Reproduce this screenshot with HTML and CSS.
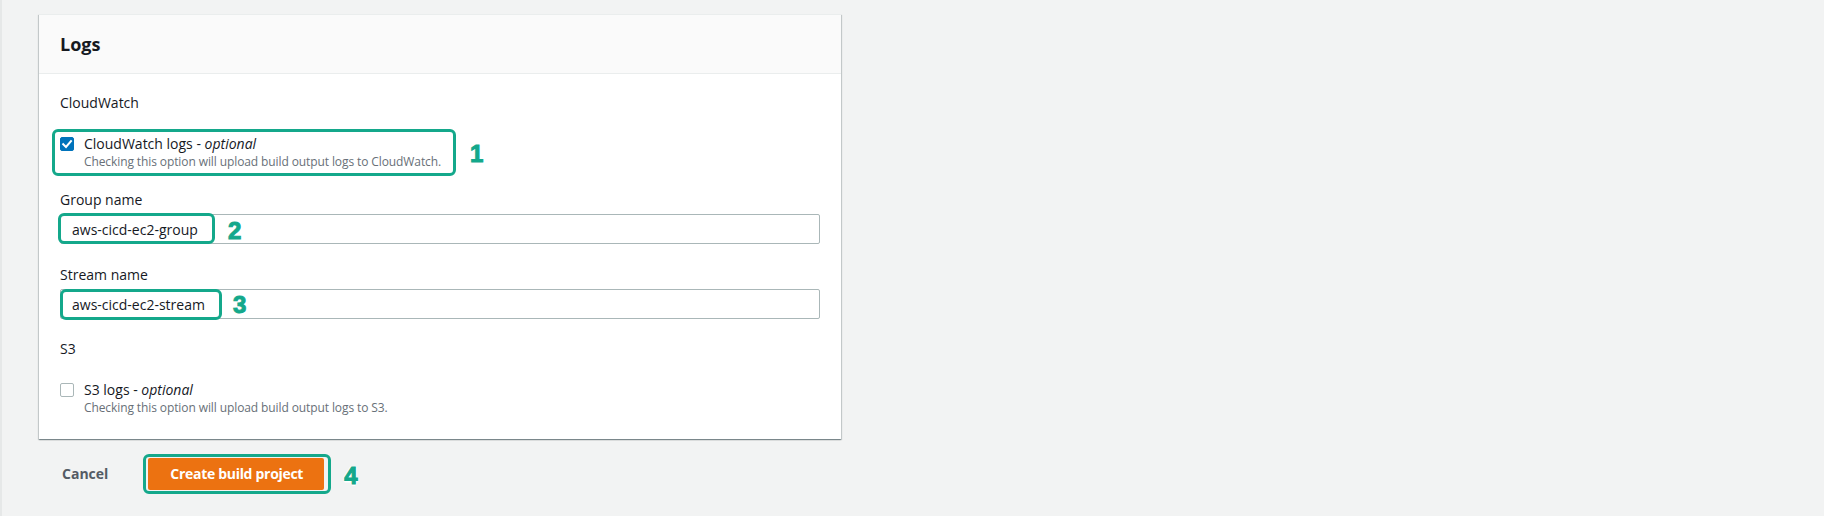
FILE: index.html
```html
<!DOCTYPE html>
<html lang="en">
<head>
<meta charset="utf-8">
<title>Logs</title>
<link rel="stylesheet" href="styles.css">
</head>
<body>
<div class="page">
  <section class="panel">
    <header class="panel-head"><h2>Logs</h2></header>
    <div class="panel-body">
      <div class="group-title">CloudWatch</div>
      <div class="check-row">
        <span class="checkbox checked">
          <svg width="14" height="14" viewBox="0 0 14 14"><polyline points="3.2,7.2 6,10 11,4.2" fill="none" stroke="#fff" stroke-width="2" stroke-linecap="square"/></svg>
        </span>
        <div class="check-text">
          <div class="check-label">CloudWatch logs - <em>optional</em></div>
          <div class="check-desc">Checking this option will upload build output logs to CloudWatch.</div>
        </div>
        <span class="mark mark-1"></span><span class="num num-1">1</span>
      </div>

      <div class="field field-group">
        <div class="field-label">Group name</div>
        <div class="input-wrap">
          <input class="input" type="text" value="aws-cicd-ec2-group" readonly>
          <span class="mark mark-2"></span><span class="num num-2">2</span>
        </div>
      </div>

      <div class="field field-stream">
        <div class="field-label">Stream name</div>
        <div class="input-wrap">
          <input class="input" type="text" value="aws-cicd-ec2-stream" readonly>
          <span class="mark mark-3"></span><span class="num num-3">3</span>
        </div>
      </div>

      <div class="group-title group-s3">S3</div>
      <div class="check-row">
        <span class="checkbox"></span>
        <div class="check-text">
          <div class="check-label">S3 logs - <em>optional</em></div>
          <div class="check-desc">Checking this option will upload build output logs to S3.</div>
        </div>
      </div>
    </div>
  </section>

  <div class="actions">
    <span class="cancel">Cancel</span>
    <div class="btn-wrap">
      <span class="btn-primary">Create build project</span>
      <span class="mark mark-4"></span><span class="num num-4">4</span>
    </div>
  </div>
</div>
</body>
</html>
```

FILE: styles.css
```css
html, body {
  margin: 0;
  padding: 0;
}
body {
  background: #f2f3f3;
  font-family: "Open Sans", "Noto Sans", sans-serif;
  color: #16191f;
  border-left: 2px solid #e6e8e8;
  min-height: 516px;
}
.page {
  padding: 14px 0 0 37px;
  width: 802px;
}
.panel {
  background: #fff;
  border-top: 1px solid #eaeded;
  box-shadow: 0 1px 1px 0 rgba(0, 28, 36, 0.3), 1px 1px 1px 0 rgba(0, 28, 36, 0.15), -1px 1px 1px 0 rgba(0, 28, 36, 0.15);
}
.panel-head {
  height: 59px;
  box-sizing: border-box;
  display: flex;
  align-items: center;
  padding: 0 21px;
  background: #fafafa;
  border-bottom: 1px solid #eaeded;
}
.panel-head h2 {
  margin: 0;
  font-size: 18px;
  font-weight: 700;
  line-height: 22px;
}
.panel-body {
  padding: 18px 21px 23px;
}
.group-title {
  font-size: 14px;
  line-height: 22px;
}
.group-s3 {
  margin-top: 19px;
}
.check-row {
  position: relative;
  display: flex;
  gap: 10px;
  margin-top: 20px;
}
.checkbox {
  flex: none;
  width: 14px;
  height: 14px;
  margin-top: 3px;
  box-sizing: border-box;
  border: 1px solid #aab7b8;
  border-radius: 2px;
  background: #fff;
}
.checkbox svg {
  display: block;
  margin: -1px;
}
.checkbox.checked {
  background: #0073bb;
  border-color: #0073bb;
}
.check-label {
  font-size: 14px;
  line-height: 20px;
}
.check-label em {
  font-style: italic;
}
.check-desc {
  font-size: 12px;
  line-height: 16px;
  color: #687078;
  letter-spacing: -0.1px;
}
.field-group {
  margin-top: 20px;
}
.field-stream {
  margin-top: 21px;
}
.field-label {
  font-size: 14px;
  line-height: 20px;
  margin-bottom: 4px;
}
.input-wrap {
  position: relative;
}
.input {
  display: block;
  width: 100%;
  height: 30px;
  box-sizing: border-box;
  margin: 0;
  padding: 0 11px;
  border: 1px solid #aab7b8;
  border-radius: 2px;
  background: #fff;
  font-family: "Open Sans", "Noto Sans", sans-serif;
  font-size: 14px;
  color: #16191f;
  outline: none;
}
.actions {
  display: flex;
  align-items: center;
  gap: 40px;
  margin-top: 19px;
  padding-left: 23px;
}
.cancel {
  font-size: 14px;
  font-weight: 700;
  color: #545b64;
  line-height: 20px;
}
.btn-wrap {
  position: relative;
}
.btn-primary {
  display: block;
  height: 32px;
  line-height: 32px;
  padding: 0 21px 0 22px;
  background: #ec7211;
  color: #fff;
  font-size: 14px;
  font-weight: 700;
  letter-spacing: -0.3px;
  border-radius: 2px;
}

/* annotation overlays */
.mark {
  position: absolute;
  box-sizing: border-box;
  border: 3px solid #14a88b;
  border-radius: 6px;
  pointer-events: none;
}
.mark-1 { left: -8px; top: -5px; width: 404px; height: 47px; }
.mark-2 { left: -2px; top: -1px; width: 157px; height: 31px; }
.mark-3 { left: 0; top: 0; width: 162px; height: 31px; }
.mark-4 { left: -5px; top: -4px; width: 188px; height: 40px; }
.num {
  position: absolute;
  font-family: "Liberation Sans", Arial, sans-serif;
  font-weight: 700;
  font-size: 24px;
  line-height: 24px;
  color: #14a88b;
  -webkit-text-stroke: 1px #14a88b;
  text-shadow: 1.5px 0 0 #fff, -1.5px 0 0 #fff, 0 1.5px 0 #fff, 0 -1.5px 0 #fff, 1px 1px 0 #fff, -1px -1px 0 #fff, 1px -1px 0 #fff, -1px 1px 0 #fff;
}
.num-1 { left: 410px; top: 8px; }
.num-2 { left: 168px; top: 5px; }
.num-3 { left: 173px; top: 4px; }
.num-4 { left: 196px; top: 6px; }
```
